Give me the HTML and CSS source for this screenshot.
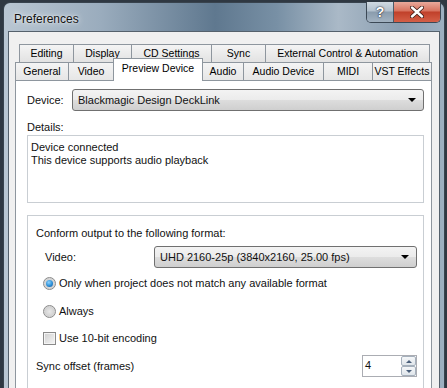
FILE: index.html
```html
<!DOCTYPE html>
<html lang="en">
<head>
    <meta charset="UTF-8">
    <title>Preferences</title>
    <link rel="stylesheet" href="styles.css">
</head>
<body>
    <div class="window">
        <div class="titlebar">
            <span class="title">Preferences</span>
            <div class="caption-buttons">
                <div class="cap-btn help">?</div>
                <div class="cap-btn close">
                    <svg width="14" height="12" viewBox="0 0 14 12">
                        <path d="M2 1.5 L12 10.5 M12 1.5 L2 10.5" stroke="#3a1a14" stroke-width="4" stroke-linecap="round"/>
                        <path d="M2 1.5 L12 10.5 M12 1.5 L2 10.5" stroke="#fff" stroke-width="2.4" stroke-linecap="round"/>
                    </svg>
                </div>
            </div>
        </div>

        <div class="client">
            <!-- Вкладки в два ряда -->
            <div class="tabs">
                <div class="tab-row back">
                    <div class="tab">Editing</div>
                    <div class="tab">Display</div>
                    <div class="tab">CD Settings</div>
                    <div class="tab">Sync</div>
                    <div class="tab last">External Control &amp; Automation</div>
                </div>
                <div class="tab-row front">
                    <div class="tab">General</div>
                    <div class="tab">Video</div>
                    <div class="tab active">Preview Device</div>
                    <div class="tab">Audio</div>
                    <div class="tab">Audio Device</div>
                    <div class="tab">MIDI</div>
                    <div class="tab last">VST Effects</div>
                </div>
            </div>

            <div class="tab-page">
                <div class="device-row">
                    <span class="device-label">Device:</span>
                    <div class="combo device-combo">
                        <span>Blackmagic Design DeckLink</span>
                        <span class="combo-arrow"></span>
                    </div>
                </div>

                <div class="details-label">Details:</div>
                <div class="details-box">
                    <div>Device connected</div>
                    <div>This device supports audio playback</div>
                </div>

                <div class="format-box">
                    <div class="format-title">Conform output to the following format:</div>

                    <div class="video-row">
                        <span class="video-label">Video:</span>
                        <div class="combo video-combo">
                            <span>UHD 2160-25p (3840x2160, 25.00 fps)</span>
                            <span class="combo-arrow"></span>
                        </div>
                    </div>

                    <label class="option first">
                        <span class="radio checked"></span>
                        Only when project does not match any available format
                    </label>
                    <label class="option second">
                        <span class="radio"></span>
                        Always
                    </label>
                    <label class="option third">
                        <span class="checkbox"></span>
                        Use 10-bit encoding
                    </label>

                    <div class="sync-row">
                        <span>Sync offset (frames)</span>
                        <div class="spinner">
                            <span class="spinner-value">4</span>
                            <div class="spinner-buttons">
                                <div class="spin-btn"><span class="up"></span></div>
                                <div class="spin-btn"><span class="down"></span></div>
                            </div>
                        </div>
                    </div>
                </div>
            </div>
        </div>
    </div>
</body>
</html>
```

FILE: styles.css
```css
/* Общие стили */
* {
    margin: 0;
    padding: 0;
    box-sizing: border-box;
}

body {
    background: #2f3842;
    font-family: "Liberation Sans", Arial, sans-serif;
    font-size: 11px;
    color: #111;
    height: 388px;
    overflow: hidden;
}

/* Окно */
.window {
    margin: 2px 0 0 3px;
    width: 442px;
    height: 386px;
    border: 1px solid #38434e;
    border-bottom: none;
    border-radius: 7px 7px 0 0;
    background: linear-gradient(90deg, #b9c6d2 0%, #9aacbd 22%, #5f788f 48%, #7890a5 62%, #aab9c7 76%, #8a9eb1 90%, #9db0c1 100%);
    padding: 0 4px;
    display: flex;
    flex-direction: column;
}

.titlebar {
    height: 28px;
    display: flex;
    align-items: flex-start;
}

.title {
    font-size: 12px;
    margin: 9px 0 0 6px;
    color: #111;
    text-shadow: 0 0 6px rgba(255, 255, 255, 0.9), 0 0 2px rgba(255, 255, 255, 0.8);
}

.caption-buttons {
    margin-left: auto;
    margin-right: -1px;
    margin-top: -1px;
    display: flex;
    border: 1px solid #3c4956;
    border-top: none;
    border-radius: 0 0 5px 5px;
    overflow: hidden;
}

.cap-btn {
    height: 20px;
    display: flex;
    align-items: center;
    justify-content: center;
}

.help {
    width: 27px;
    border-right: 1px solid #4c5a68;
    background: linear-gradient(#d0d9e2 0%, #b2c0cd 45%, #8a9cad 50%, #a2b2c1 100%);
    color: #fff;
    font-weight: bold;
    font-size: 14px;
    text-shadow: 0 0 2px #223, 0 0 1px #223;
}

.close {
    width: 46px;
    background: linear-gradient(#e9a99b 0%, #d7725e 45%, #c0402a 50%, #d45f47 100%);
}

/* Клиентская область */
.client {
    flex: 1;
    background: #f0f0f0;
    border: 1px solid #55616c;
    border-bottom: none;
    padding: 12px 7px 0 6px;
    display: flex;
    flex-direction: column;
    min-height: 0;
}

/* Вкладки */
.tab-row {
    display: grid;
    height: 18px;
}

.tab-row.back {
    margin-left: 4px;
    margin-right: 2px;
    grid-template-columns: 54px 58px 80px 54px 1fr;
}

.tab-row.front {
    grid-template-columns: 53px 45px 90px 40px 80px 49px 1fr;
}

.tab {
    border: 1px solid #8e969e;
    border-right: none;
    border-bottom: none;
    background: linear-gradient(#f4f4f4, #e2e2e2);
    font-size: 10.5px;
    line-height: 17px;
    text-align: center;
    white-space: nowrap;
    overflow: hidden;
    color: #000;
}

.tab.last {
    border-right: 1px solid #8e969e;
}

.tab.active {
    position: relative;
    top: -4px;
    height: 23px;
    background: #fff;
    border-right: 1px solid #8e969e;
    z-index: 2;
    line-height: 19px;
}

.tab.active + .tab {
    border-left: none;
}

/* Страница вкладки */
.tab-page {
    flex: 1;
    min-height: 0;
    background: #fff;
    border: 1px solid #8e969e;
    border-bottom: none;
    padding: 8px 7px 0 11px;
    display: flex;
    flex-direction: column;
}

.device-row {
    display: flex;
    align-items: center;
}

.device-label {
    width: 45px;
}

.combo {
    height: 22px;
    border: 1px solid #707070;
    border-radius: 3px;
    background: linear-gradient(#f3f3f3 0%, #ebebeb 50%, #dddddd 51%, #cfcfcf 100%);
    display: flex;
    align-items: center;
    padding: 0 7px 0 5px;
    justify-content: space-between;
}

.device-combo {
    flex: 1;
}

.combo-arrow {
    width: 0;
    height: 0;
    border-left: 4px solid transparent;
    border-right: 4px solid transparent;
    border-top: 4px solid #000;
}

.details-label {
    margin-top: 9px;
    line-height: 14px;
}

.details-box {
    height: 68px;
    flex-shrink: 0;
    border: 1px solid #c9ced3;
    margin-top: 1px;
    padding: 5px 3px;
    line-height: 13px;
}

/* Блок формата */
.format-box {
    flex: 1;
    min-height: 0;
    margin-top: 12px;
    border: 1px solid #c9ced3;
    border-bottom: none;
    padding: 10px 6px 0 8px;
}

.format-title {
    line-height: 14px;
}

.video-row {
    display: flex;
    align-items: center;
    margin-top: 6px;
}

.video-label {
    width: 118px;
    padding-left: 9px;
}

.video-combo {
    flex: 1;
}

.option {
    display: flex;
    align-items: center;
    gap: 3px;
    height: 14px;
    padding-left: 7px;
}

.option.first {
    margin-top: 8px;
}

.option.second {
    margin-top: 14px;
}

.option.third {
    margin-top: 13px;
}

.radio {
    width: 13px;
    height: 13px;
    border-radius: 50%;
    border: 1px solid #8a8a8a;
    background: radial-gradient(circle, #e8e8e8 0%, #d2d2d2 60%, #f4f4f4 100%);
    display: flex;
    align-items: center;
    justify-content: center;
}

.radio.checked::after {
    content: "";
    width: 7px;
    height: 7px;
    border-radius: 50%;
    background: radial-gradient(circle at 40% 35%, #8fd3ff 0%, #2c8fd6 55%, #0f4f9a 100%);
}

.checkbox {
    width: 13px;
    height: 13px;
    border: 1px solid #8a8a8a;
    background: linear-gradient(135deg, #cfcfcf, #f6f6f6);
    box-shadow: inset 0 0 0 1px #f4f4f4;
}

/* Смещение синхронизации */
.sync-row {
    display: flex;
    align-items: center;
    justify-content: space-between;
    margin-top: 10px;
}

.spinner {
    width: 55px;
    height: 22px;
    border: 1px solid #abadb3;
    display: flex;
}

.spinner-value {
    flex: 1;
    padding: 3px 2px;
}

.spinner-buttons {
    width: 15px;
    display: flex;
    flex-direction: column;
}

.spin-btn {
    flex: 1;
    border: 1px solid #a5b0bc;
    border-radius: 2px;
    background: linear-gradient(#f5f7f9, #dfe5ea);
    display: flex;
    align-items: center;
    justify-content: center;
}

.spin-btn .up {
    border-left: 3px solid transparent;
    border-right: 3px solid transparent;
    border-bottom: 3px solid #4a5f7a;
}

.spin-btn .down {
    border-left: 3px solid transparent;
    border-right: 3px solid transparent;
    border-top: 3px solid #4a5f7a;
}
```
